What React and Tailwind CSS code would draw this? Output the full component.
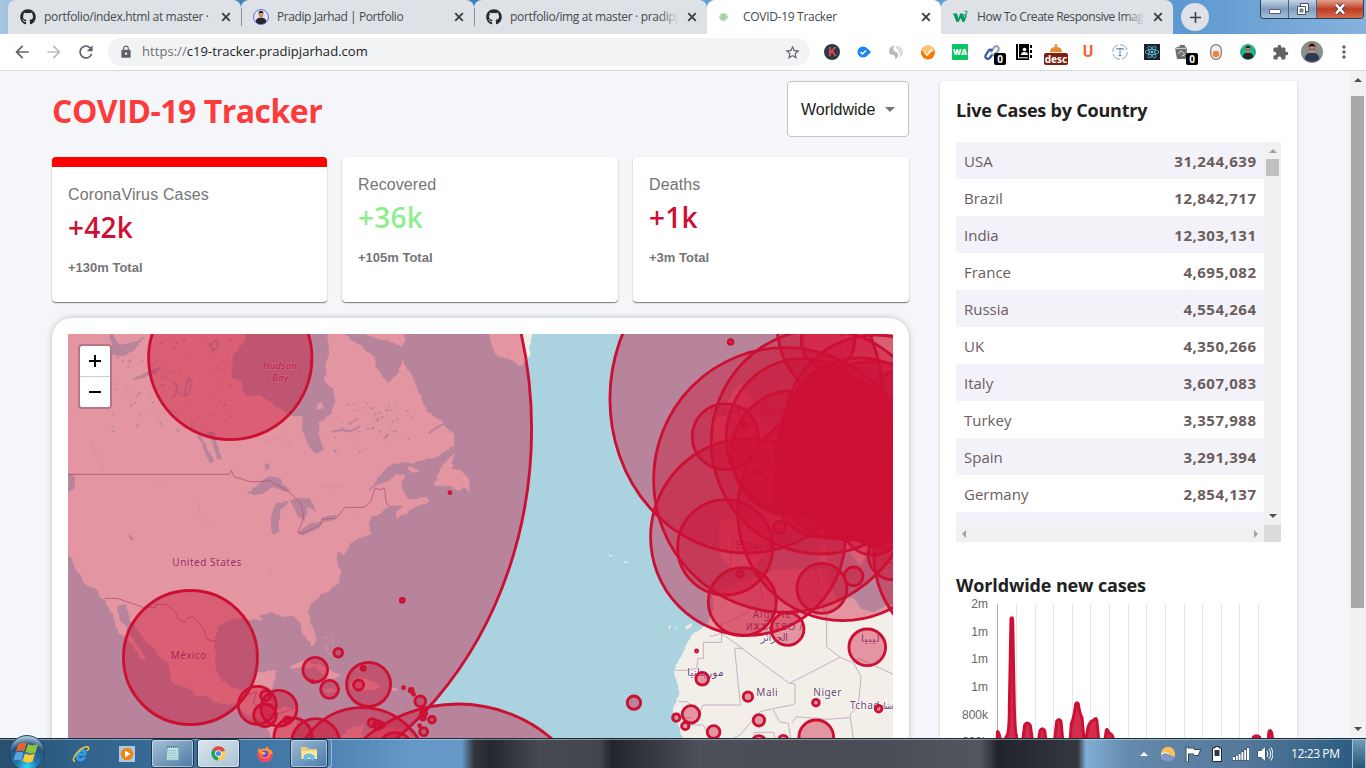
import React from "react";
import { FaGithub, FaReact } from "react-icons/fa";
import { MdArrowBack, MdArrowForward, MdRefresh, MdLock, MdStarBorder, MdAdd, MdMoreVert, MdExtension } from "react-icons/md";

const RED = "#CC1034";

function seeded(seed) {
  let s = seed;
  return () => {
    s = (s * 16807) % 2147483647;
    return s / 2147483647;
  };
}

// Turns a coarse outline into an irregular coastline by midpoint displacement.
function coast(text, amp = 0.16, seed = 7) {
  const rnd = seeded(seed);
  let pts = text.trim().split(/\s+/).map((p) => p.split(",").map(Number));
  for (let k = 0; k < 4; k++) {
    const next = [];
    pts.forEach((a, i) => {
      const b = pts[(i + 1) % pts.length];
      const dx = b[0] - a[0];
      const dy = b[1] - a[1];
      const len = Math.hypot(dx, dy);
      const scale = k === 0 ? 0.6 : 1 + k * 0.35;
      const f = len > 230 || len < 3 ? 0 : (rnd() - 0.5) * 2 * amp * scale;
      next.push(a, [(a[0] + b[0]) / 2 - dy * f, (a[1] + b[1]) / 2 + dx * f]);
    });
    pts = next;
  }
  return "M" + pts.map((p) => p[0].toFixed(1) + " " + p[1].toFixed(1)).join("L") + "Z";
}

const AMERICA_LAND = [
  "-10,-10 555,-10 553,50 518,95 516,160 545,168 555,215 605,212 650,245 690,272 728,276 728,320 740,355 770,388 791,375 778,335 778,290 815,265 826,225 818,190 795,170 797,110 808,80 800,27 800,-10 850,-10 855,30 885,50 920,80 945,95 950,130 985,178 1010,150 1028,105 1060,160 1085,220 1100,260 1150,290 1180,325 1182,365 1140,392 1100,402 1060,415 1000,415 960,450 925,500 975,470 1010,447 1035,450 1025,480 1035,510 1050,525 1100,515 1108,530 1060,550 1010,580 1005,560 1030,545 1000,540 985,550 935,575 925,600 938,628 900,640 870,655 855,690 832,680 830,700 843,740 838,770 800,800 760,830 742,860 755,900 768,945 755,965 730,930 722,895 700,872 670,875 640,862 595,872 608,885 590,885 550,880 510,885 475,905 465,950 465,1020 490,1070 540,1095 575,1085 590,1045 650,1033 645,1065 635,1090 630,1150 705,1150 710,1200 690,1260 640,1260 620,1200 560,1170 530,1135 485,1138 400,1105 335,1070 330,1030 290,985 240,925 205,885 190,845 172,850 180,890 215,935 240,970 263,1005 240,1000 205,950 168,910 160,870 135,825 105,790 78,780 60,745 24,690 -10,670",
  "1275,-10 1420,-10 1412,80 1385,125 1340,100 1310,92 1290,50",
  "895,-10 1040,-10 1027,70 990,50 960,45 905,30",
  "1185,380 1165,400 1122,480 1170,483 1195,500 1212,485 1230,505 1228,470 1205,435 1175,432",
  "690,1028 730,1008 780,1015 820,1040 858,1055 810,1062 760,1025",
  "880,1060 920,1062 968,1085 930,1095 870,1090",
  "995,1090 1012,1091 1011,1098 996,1098",
  "790,1095 812,1088 828,1098 805,1104",
  "835,1260 860,1215 912,1195 905,1230 960,1215 1040,1215 1080,1260",
  "1040,425 1080,437 1060,445",
  "770,240 785,230 790,250 772,255",
];
const AMERICA_WATER = [
  "560,505 600,475 622,455 660,458 668,478 690,492 680,502 640,485 600,508",
  "636,560 650,532 688,530 660,555 657,620 640,628 633,595",
  "690,525 750,520 770,560 740,545 735,590 715,575 700,545",
  "714,625 745,600 790,590 775,610 730,630",
  "785,580 830,568 825,585 790,592",
  "410,330 430,372 452,415 462,410 440,365 425,335",
  "440,318 465,325 470,355 488,405 470,402 455,350",
  "140,10 180,62 260,30 225,75 190,92 150,90 155,60",
  "215,165 245,148 310,122 290,145 240,162",
  "172,845 200,838 208,895 190,885",
  "614,415 630,417 626,435 616,434",
  "203,628 222,642 214,648",
  "24,445 42,450 45,490 24,500",
];
const EAST_LAND = [
  "440,1260 420,1210 398,1160 418,1100 402,1040 430,980 455,930 500,900 522,850 515,800 540,800 600,770 680,740 770,730 862,735 872,790 890,830 940,820 962,850 1000,862 1060,835 1080,1260",
  "540,690 545,580 640,590 695,605 680,680 650,722 570,732",
  "690,605 640,560 680,500 610,480 720,430 800,350 850,250 1080,230 1080,690 1010,650 985,670 960,720 900,650 840,610 780,610",
  "560,235 600,170 650,250 700,330 720,400 620,430 600,330",
  "520,280 570,270 575,340 520,370",
  "790,-10 1080,-10 1080,180 960,120 840,180 800,120",
  "205,692 218,690 214,695",
  "200,686 208,684 205,688",
  "251,711 264,710 262,714 253,713",
  "384,905 392,900 390,915",
  "405,908 411,908 408,915",
  "435,908 458,893 452,906 440,914",
  "835,660 858,655 862,715 838,710",
];
const WEST_BORDERS =
  "M24 448H508L514 436L522 455L570 470L612 470L626 465L690 502L725 540L731 580L714 622L725 626L782 600L786 582L828 580L855 547H912L932 530L945 490L958 494L974 490L978 530L990 548M135 820H172L250 847H286V838H318L350 865V880L374 892L385 877H402L430 910L440 942L474 952";
const EAST_BORDERS =
  "M405 1036H440L470 1030L474 1000H490V952H545V925L510 935M545 925L748 1075L765 1077M748 1075L900 997L940 1013L955 1000L1060 1048M610 970H584L601 1140H490L480 1160L440 1130L415 1130M765 1077V1135L755 1140L695 1152L660 1160L630 1195L600 1230L580 1240M860 860V965L900 997M540 900L600 875L670 830L660 780M940 1013L963 1055L955 1140L930 1170L940 1240M700 1155L718 1190L745 1195L752 1240M755 1195L770 1175L860 1183L928 1178M642 1240V1222H700L705 1240M820 710L835 770L825 800L845 830L855 865M545 610L580 630L570 730M440 1200H490L510 1240M905 60V110M420 1178H456";

const AMERICA_CASES = [
  [512, 99, 245, 245], [438, 313, 978, 1144], [392.5, 997.5, 201, 201], [593, 1141, 57], [658, 1150, 54], [618, 1112, 15], [616, 1171, 34],
  [682, 1185, 9], [700, 1236, 57], [768, 1253, 72], [907, 1347, 199], [1008, 1275, 52], [1195, 1570, 433], [767, 1034, 37], [810, 1093, 27],
  [836, 983, 13], [759, 1070, 3], [911, 1030, 6], [927, 1078, 66], [897, 1080, 15], [1032, 1088, 3], [1055, 1096, 6], [1062, 1108, 3],
  [1082, 1129, 16], [1092, 1165, 9], [1090, 1178, 7], [1117, 1184, 10], [1080, 1202, 3], [1092, 1220, 12], [938, 1193, 12], [955, 1200, 13],
  [965, 1200, 8], [1028, 826, 6], [1171, 503, 3],
];
const EAST_CASES = [
  [620, 222, 409, 462], [735, 465, 393, 397], [625, 636, 292, 295], [557, 667, 143], [608, 830, 102], [557, 335, 99], [615, 303, 8],
  [657, 440, 10], [744, 912, 49], [847, 790, 75], [942, 754, 28], [720, 607, 18], [601, 747, 10], [573, 51, 7], [910, 560, 316, 327],
  [845, 350, 330, 337], [790, 336, 230, 235], [760, 385, 183, 188], [850, 487, 150], [865, 50, 80], [960, 0, 248], [862, 225, 82],
  [960, 335, 236], [1010, 305, 275], [980, 450, 190], [960, 400, 165], [1020, 440, 200], [1040, 520, 150], [930, 420, 195], [1060, 690, 74],
  [1300, 690, 297], [1075, 230, 90], [890, 480, 160], [900, 330, 170], [1000, 380, 270], [1010, 560, 100], [1000, 600, 90], [920, 545, 100],
  [810, 450, 95], [800, 490, 55], [840, 380, 130], [983, 967, 55], [488, 1061, 19], [471, 978, 3], [283, 1133, 20], [454, 1168, 26],
  [410, 1178, 11], [437, 1203, 11], [522, 1221, 19], [625, 1115, 14], [658, 1186, 17], [829, 1133, 10], [830, 1237, 52], [1017, 1151, 10],
  [658, 1252, 20], [731, 1244, 13],
];

function Cases({ list }) {
  return (
    <g fill={RED} fillOpacity="0.4" stroke={RED} strokeWidth="8.6">
      {list.map((c, i) => (
        <ellipse key={i} cx={c[0]} cy={c[1]} rx={c[2]} ry={c[3] || c[2]} />
      ))}
    </g>
  );
}

function lakes() {
  const rnd = seeded(91);
  const out = [];
  for (let i = 0; i < 150; i++) {
    const east = i % 3 === 0;
    const x = east ? 820 + rnd() * 270 : 110 + rnd() * 400;
    const y = east ? 235 + rnd() * 150 : 40 + rnd() * 285;
    const w = 2 + rnd() * 7;
    const h = 2 + rnd() * 5;
    out.push(`M${x} ${y}l${w} ${-h}l${w * 0.6} ${h * 0.5}l${-w * 0.7} ${h}z`);
  }
  return out.join("");
}

function MapLabel({ x, y, w, size = 30, font = "Noto Sans", children, italic, fill = "#6d4673" }) {
  return (
    <text
      x={x} y={y} textLength={w} fontSize={size} fill={fill} stroke="#ffffff" strokeOpacity="0.6" strokeWidth="5" paintOrder="stroke"
      fontFamily={`"${font}", "DejaVu Sans", sans-serif`} fontStyle={italic ? "italic" : "normal"}
    >
      {children}
    </text>
  );
}

function WorldMap() {
  return (
    <svg className="block h-full w-full" viewBox="68 334 825 404" preserveAspectRatio="none">
      <rect x="68" y="334" width="825" height="404" fill="#aad3df" />
      <g transform="translate(60 325) scale(0.33333)">
        {AMERICA_LAND.map((p, i) => <path key={i} d={coast(p, 0.12, 11 + i)} fill="#f2efe9" />)}
        {AMERICA_WATER.map((p, i) => <path key={i} d={coast(p, 0.1, 31 + i)} fill="#aad3df" />)}
        <path d={lakes()} fill="#aad3df" />
        <path d="M340 170l12 15l-5 25l-12 8M385 160l10 10l-8 35l-15 8zM450 60l20 -15l5 20l-15 12zM815 320l30 -5l30 3l25 -15M1105 325l30 -20l20 -10" fill="none" stroke="#aad3df" strokeWidth="6" />
        <path d="M290 485l28-10M410 512l10 40l-6 18l20 20l15 5M630 728v26M780 480l40 10l30-10M885 548v25M455 155l30-20l20 5M90 350l30 60l20 50M610 350l50-10l40 20" fill="none" stroke="#cfe0e3" strokeWidth="2" />
        <path d={WEST_BORDERS} fill="none" stroke="#ae82aa" strokeWidth="2.6" />
        <path d="M565 1110L590 1100L580 1135L610 1150M620 1172L660 1165L700 1150" fill="none" stroke="#ae82aa" strokeWidth="2.6" />
        <path d="M790 940l12 -3M815 940l5 14M796 960l5 20M805 985l8 5" stroke="#f2efe9" strokeWidth="3" fill="none" />
        <MapLabel x={609} y={133} w={101} size={28} italic>Hudson</MapLabel>
        <MapLabel x={636} y={168} w={48} size={28} italic>Bay</MapLabel>
        <MapLabel x={337} y={722} w={207}>United States</MapLabel>
        <MapLabel x={332} y={1001} w={107}>México</MapLabel>
      </g>
      <g transform="translate(540 325) scale(0.33333)">
        {EAST_LAND.map((p, i) => <path key={i} d={coast(p, 0.07, 51 + i)} fill="#f2efe9" />)}
        <path d={EAST_BORDERS} fill="none" stroke="#c4b0c4" strokeWidth="3" />
        <MapLabel x={498} y={269} w={250}>United Kingdom</MapLabel>
        <MapLabel x={587} y={673} w={108}>España</MapLabel>
        <MapLabel x={638} y={878} w={140}>Algérie / </MapLabel>
        <MapLabel x={617} y={914} w={170} font="DejaVu Sans" size={28}>ⵍⵣⵣⴰⵢⴻⵔ /</MapLabel>
        <MapLabel x={662} y={948} w={82} font="DejaVu Sans" size={31}>الجزائر</MapLabel>
        <MapLabel x={963} y={950} w={56} font="DejaVu Sans" size={32}>ليبيا</MapLabel>
        <MapLabel x={441} y={1053} w={110} font="DejaVu Sans" size={32}>موريتانيا</MapLabel>
        <MapLabel x={649} y={1113} w={64}>Mali</MapLabel>
        <MapLabel x={820} y={1114} w={84}>Niger</MapLabel>
        <MapLabel x={930} y={1152} w={88}>Tchad</MapLabel>
        <MapLabel x={1022} y={1152} w={40} font="DejaVu Sans" size={28}>تشاد</MapLabel>
        <MapLabel x={900} y={32} w={115}>Sverige</MapLabel>
        <MapLabel x={1044} y={716} w={90}>Ελλάς</MapLabel>
      </g>
      <g transform="translate(59.6 325) scale(0.33333)"><Cases list={AMERICA_CASES} /></g>
      <g transform="translate(539.6 325) scale(0.33333)"><Cases list={EAST_CASES} /></g>
    </svg>
  );
}

function W3Icon() {
  return (
    <svg viewBox="0 0 18 16" className="h-4 w-[18px]">
      <path d="M0 4h4.500l1.500 6 2-6h3.500l1 5 .8-1.500-.8-2.500 1.500 0 1.500 2-2.800 6.500h-2l-2-4.500-2.500 4.500H4z" fill="#059862" />
      <path d="M13 1.500h3l-1.500 1.600q1.600.2 1.200 1.500T13 5.300" fill="none" stroke="#059862" />
    </svg>
  );
}

function Person({ ring, bg, shirt = "#26262b", glasses }) {
  return (
    <svg viewBox="0 0 16 16" className="h-full w-full">
      <circle cx="8" cy="8" r="7.500" fill={bg} stroke={ring} />
      <path d="M2.600 13Q3 9 6.500 8.700h3Q13 9 13.400 13 8 17.600 2.600 13z" fill={shirt} />
      <ellipse cx="8" cy="5.800" rx="2.300" ry="3" fill="#c79274" />
      <path d="M5.500 5.200Q5.600 1.800 8 1.800t2.500 3.400L9.800 4H6.400z" fill="#211a18" />
      {glasses && <path d="M6 6h1.600M8.400 6H10" stroke="#222" strokeWidth=".8" />}
    </svg>
  );
}

function Virus() {
  return (
    <svg viewBox="0 0 16 16" className="size-4">
      <circle cx="4.500" cy="8" r="3.300" fill="#a5cfa5" />
      <circle cx="4.500" cy="8" r="3.800" fill="none" stroke="#b5d9b5" strokeWidth="1.400" strokeDasharray="1.600 1.200" />
    </svg>
  );
}

function Close() {
  return (
    <svg viewBox="0 0 14 14" className="ml-[6px] size-[14px] shrink-0">
      <path d="M3.200 3.200l7.600 7.600M10.800 3.200l-7.600 7.600" stroke="#3c4043" strokeWidth="1.900" />
    </svg>
  );
}

function Tab({ icon, title, titleClass, className, active, fade }) {
  return (
    <div className={`flex h-[34px] shrink-0 items-center overflow-hidden rounded-t-lg pl-3 pr-2 ${active ? "bg-white" : "bg-[#dee1e6]"} ${className}`}>
      <div className="flex size-4 shrink-0 items-center justify-center text-[#24292e]">{icon}</div>
      <div className="relative ml-2 flex h-5 min-w-0 flex-1 overflow-hidden whitespace-nowrap text-[12px] leading-5 text-[#45494d]">
        <span className={titleClass}>{title}</span>
        {fade && <span className="absolute inset-y-0 right-0 w-5 bg-gradient-to-r from-transparent to-[#dee1e6]" />}
      </div>
      <Close />
    </div>
  );
}

function TabStrip() {
  return (
    <div className="flex h-[34px] shrink-0 bg-[linear-gradient(90deg,#a5c6e3_0px,#3f82b5_240px,#3f82b5_480px,#62a3da_720px,#5c99d0_1180px,#86b2dc_1366px)] pl-2">
      <Tab className="w-[233px]" icon={<FaGithub className="size-4" />} title="portfolio/index.html at master ·" titleClass="tracking-[-0.33px]" />
      <div className="relative z-10 my-2 -mr-px w-px bg-[#8b8f94]" />
      <Tab className="w-[233px]" icon={<Person ring="#5e6ff0" bg="#e6e6ea" />} title="Pradip Jarhad | Portfolio" titleClass="tracking-[-0.42px]" />
      <div className="relative z-10 my-2 -mr-px w-px bg-[#8b8f94]" />
      <Tab className="w-[233px]" icon={<FaGithub className="size-4" />} title="portfolio/img at master · pradipj" titleClass="tracking-[-0.33px]" fade />
      <Tab className="w-[234px]" active icon={<Virus />} title="COVID-19 Tracker" titleClass="tracking-[-0.3px]" />
      <Tab className="w-[232px]" icon={<W3Icon />} title="How To Create Responsive Imag" titleClass="tracking-[-0.45px]" fade />
      <div className="ml-2 mt-[3px] flex size-7 items-center justify-center rounded-full bg-[#dee1e6]">
        <MdAdd className="size-[19px] text-[#3c4043]" />
      </div>
      <div className="ml-[51px] flex h-[19px] w-[104px] overflow-hidden rounded-b border border-t-0 border-[#27405e]">
        <div className="flex w-7 items-center justify-center border-r border-[#4a6484] bg-gradient-to-b from-[#c5d5e6] via-[#7f9cbd] to-[#a5bfd9]">
          <span className="mt-1 h-[5px] w-3 rounded-[1px] border border-[#56606c] bg-white" />
        </div>
        <div className="flex w-7 items-center justify-center border-r border-[#4a6484] bg-gradient-to-b from-[#c5d5e6] via-[#7f9cbd] to-[#a5bfd9]">
          <svg viewBox="0 0 12 12" className="-mt-px size-3">
            <path d="M3.500.5h8v8h-8z" fill="#fff" stroke="#4b5663" /><path d="M.5 3.500h8v8h-8z" fill="#fff" stroke="#4b5663" />
            <path d="M3 6h3v3H3z" fill="#7f9cbd" stroke="#56606c" strokeWidth=".8" />
          </svg>
        </div>
        <div className="flex flex-1 items-center justify-center bg-gradient-to-b from-[#e0a08f] via-[#c03a22] to-[#d56a4a]">
          <svg viewBox="0 0 12 12" className="-mt-px h-3 w-3">
            <path d="M2 1.500l8 9M10 1.500l-8 9" stroke="#5b3f46" strokeWidth="4.600" />
            <path d="M2 1.500l8 9M10 1.500l-8 9" stroke="#fff" strokeWidth="2.600" />
          </svg>
        </div>
      </div>
    </div>
  );
}

function Ext({ children }) {
  return <div className="relative flex w-8 shrink-0 items-center justify-center">{children}</div>;
}

function Badge({ children, className }) {
  return <span className={`absolute flex h-3 items-center justify-center rounded-[2px] font-['Noto_Sans'] text-[10px] font-bold leading-none text-white ${className}`}>{children}</span>;
}

function Toolbar() {
  return (
    <div className="flex h-[37px] shrink-0 items-center border-b border-[#d9dadd] bg-white">
      <MdArrowBack className="ml-3 size-5 text-[#5f6368]" />
      <MdArrowForward className="ml-3 size-5 text-[#bbbdc0]" />
      <MdRefresh className="ml-[12px] size-5 text-[#5f6368]" />
      <div className="ml-3 flex h-7 w-[702px] items-center rounded-full bg-[#f1f3f4] pl-[11px] pr-[9px]">
        <MdLock className="size-[14px] text-[#5f6368]" />
        <span className="ml-[9px] flex-1 text-[13px] tracking-[0.05px] text-[#202124]"><span className="text-[#6b7075]">https://</span>c19-tracker.pradipjarhad.com</span>
        <MdStarBorder className="size-[17px] text-[#5f6368]" />
      </div>
      <div className="ml-[6px] flex h-full">
        <Ext><span className="flex size-4 items-center justify-center rounded-full bg-[#2b3a4a] font-['Roboto'] text-[13px] font-semibold text-[#e2474b]">K</span></Ext>
        <Ext>
          <svg viewBox="0 0 16 16" className="size-4">
            <path d="M7 2.500q3 0 5 2.500l3 3-3 3q-2 2.500-5 2.500a5.500 5.500 0 0 1 0-11z" fill="#1e84ee" />
            <path d="M4.500 8l2 2 3.500-3.500" fill="none" stroke="#fff" strokeWidth="1.500" />
          </svg>
        </Ext>
        <Ext>
          <svg viewBox="0 0 16 16" className="size-4">
            <path d="M6 1.500Q1 3 1 7q0 4 4 4 3 .5 2 4 4-1.500 3-5Q9.500 8 7 7.500T6 1.500z" fill="#b9b9b9" />
            <path d="M8 2q6 0 7 5 .5 5-4 7 2-4-.5-7Q8 5 8 2z" fill="#dcdcdc" />
          </svg>
        </Ext>
        <Ext>
          <svg viewBox="0 0 16 16" className="size-4">
            <circle cx="8" cy="8.500" r="7" fill="#f57a08" />
            <path d="M1.600 7a6.500 6.500 0 0 1 12.800 0Q8 10 1.600 7z" fill="#ffc46e" />
            <path d="M4.500 8l2.500 3 5-5.500" fill="none" stroke="#fff" strokeWidth="1.800" />
          </svg>
        </Ext>
        <Ext>
          <svg viewBox="0 0 16 16" className="size-4">
            <rect width="16" height="16" rx="1" fill="#0bc462" />
            <text x="1" y="10.800" textLength="14" lengthAdjust="spacingAndGlyphs" fontFamily="Open Sans, sans-serif" fontSize="8" fontWeight="800" fill="#fff">WA</text>
          </svg>
        </Ext>
        <Ext>
          <svg viewBox="0 0 16 16" className="size-4">
            <path d="M6.500 8.500L10 3.500Q12.500 1 14 3t0 4L11 10.500Q9 12 7.500 10" fill="none" stroke="#9ba3b8" strokeWidth="2.200" />
            <path d="M8.500 6.500Q6 4.500 4.500 7L2 10.500q-1.500 3 .5 4t4-1.500L8 11" fill="none" stroke="#3454a4" strokeWidth="2.200" />
          </svg>
          <Badge className="bottom-[5px] left-[18px] w-3 bg-black">0</Badge>
        </Ext>
        <Ext>
          <svg viewBox="0 0 16 16" className="size-4">
            <path d="M0 0h13v16H0z M14 1h2v3h-2zM14 6h2v3h-2zM14 11h2v3h-2z" fill="#000" />
            <path d="M2.500 0v14.500M3 13.800h9" stroke="#fff" />
            <circle cx="8.500" cy="5.500" r="1.800" fill="#fff" />
            <path d="M5 11q0-3 3.500-3t3.500 3z" fill="#fff" />
          </svg>
        </Ext>
        <Ext>
          <svg viewBox="0 0 18 18" className="mb-px size-[18px]">
            <path d="M3 9q0-5 6-5t6 5z" fill="#e58a35" /><circle cx="9" cy="2.500" r="1.500" fill="#e58a35" />
            <path d="M1 10.500h16" stroke="#d4803a" strokeWidth="1.300" />
          </svg>
          <Badge className="bottom-[5px] left-1 w-6 bg-[#7c1f10]">desc</Badge>
        </Ext>
        <Ext><span className="font-['Roboto'] text-[16px] font-bold text-[#f0642f]">U</span></Ext>
        <Ext>
          <svg viewBox="0 0 16 16" className="size-4">
            <circle cx="8" cy="8" r="7.200" fill="none" stroke="#74a2c8" strokeDasharray="9 2.300" />
            <path d="M4.800 6V4.700h6.400V6M8 4.700v7M6.500 11.700h3" fill="none" stroke="#4a80ad" />
          </svg>
        </Ext>
        <Ext><span className="flex size-4 items-center justify-center bg-[#20232a]"><FaReact className="size-[14px] text-[#61dafb]" /></span></Ext>
        <Ext>
          <svg viewBox="0 0 16 16" className="mr-1 size-4">
            <path d="M1 4l5-2V1h5v2l2 1-.5 11H3z" fill="#6f6f6f" /><path d="M1.500 4.500h11" stroke="#c6c6c6" strokeWidth="1.200" />
            <path d="M4.500 10l2-3 2 1M9.500 8l1 3-3 1" stroke="#d6d6d6" fill="none" />
          </svg>
          <Badge className="bottom-[5px] left-[18px] w-3 bg-black">0</Badge>
        </Ext>
        <Ext>
          <svg viewBox="0 0 16 16" className="size-4">
            <rect x="2.700" y=".6" width="10.600" height="14.800" rx="5.300" fill="#eee" stroke="#777" strokeWidth="1.200" />
            <circle cx="8" cy="10" r="3.300" fill="#f5803c" />
          </svg>
        </Ext>
        <Ext><span className="size-4"><Person ring="#22b58e" bg="#22b58e" glasses /></span></Ext>
        <Ext><MdExtension className="size-[17px] text-[#5f6368]" /></Ext>
        <Ext><span className="size-[22px]"><Person ring="#8c8c8c" bg="#8e8e8e" shirt="#2d3b52" glasses /></span></Ext>
        <Ext><MdMoreVert className="size-5 text-[#5f6368]" /></Ext>
      </div>
    </div>
  );
}

function StatCard({ title, titleClass, value, valueClass, total, selected }) {
  return (
    <div className={`h-[145px] rounded bg-white px-4 shadow-[0_1px_1px_rgba(0,0,0,0.45),0_1px_3px_rgba(0,0,0,0.1)] ${selected ? "border-t-[10px] border-[#ff0000]" : ""}`}>
      <div className="pt-4 font-['Liberation_Sans'] text-[16px] leading-6 text-[#757575]"><span className={titleClass}>{title}</span></div>
      <div className={`mt-[3px] text-[28px] font-semibold leading-[34px] tracking-[0.25px] ${valueClass}`}>{value}</div>
      <div className="mt-3 font-['Liberation_Sans'] text-[13px] font-bold leading-6 text-[#757575]">{total}</div>
    </div>
  );
}

const COUNTRIES = [
  ["USA", "31,244,639"], ["Brazil", "12,842,717"], ["India", "12,303,131"], ["France", "4,695,082"], ["Russia", "4,554,264"],
  ["UK", "4,350,266"], ["Italy", "3,607,083"], ["Turkey", "3,357,988"], ["Spain", "3,291,394"], ["Germany", "2,854,137"], ["", ""],
];

function Arrow({ d, color = "#a3a3a3" }) {
  return <svg viewBox="0 0 8 8" className="size-2"><path d={d} fill={color} /></svg>;
}

const UP = "M0 6l4-4 4 4z";
const DOWN = "M0 2l4 4 4-4z";

function CountryTable() {
  return (
    <div className="mt-5 h-[400px] w-[325px]">
      <div className="flex h-[383px]">
        <div className="w-[308px] overflow-hidden">
          {COUNTRIES.map(([name, count], i) => (
            <div key={i} className={`flex h-[37px] items-center justify-between px-2 pt-0.5 text-[15px] text-[#6a5d5d] ${i % 2 ? "bg-white" : "bg-[#f3f2f8]"}`}>
              <span>{name}</span>
              <span className="-mr-[0.5px] font-bold tracking-[0.5px]">{count}</span>
            </div>
          ))}
        </div>
        <div className="flex w-[17px] flex-col items-center bg-[#f1f1f1] pb-[5px] pt-[5px]">
          <Arrow d={UP} />
          <div className="mt-1 h-[17px] w-[13px] bg-[#c1c1c1]" />
          <div className="flex-1" />
          <Arrow d={DOWN} color="#505050" />
        </div>
      </div>
      <div className="flex h-[17px]">
        <div className="flex w-[308px] items-center justify-between bg-[#f1f1f1] px-[5px]">
          <Arrow d="M5 0v8L1 4z" />
          <Arrow d="M3 0v8l4-4z" />
        </div>
        <div className="w-[17px] bg-[#dcdcdc]" />
      </div>
    </div>
  );
}

function CasesChart() {
  return (
    <div className="flex h-[180px] w-[325px]">
      <div className="flex w-8 flex-col items-end gap-[3.700px] pt-px font-['Liberation_Sans'] text-[12px] leading-6 text-[#666666]">
        {["2m", "1m", "1m", "1m", "800k", "600k"].map((t, i) => <div key={i} className="-mt-3 mb-3 h-6">{t}</div>)}
      </div>
      <svg className="h-[180px] w-[293px]" viewBox="174 309 879 540">
        <path d="M202.500 312V849" stroke="#b0b0b0" strokeWidth="3" />
        <path d="M259.500 312V849M316.500 312V849M370.500 312V849M427.500 312V849M481.500 312V849M538.500 312V849M595.500 312V849M649.500 312V849M706.500 312V849M763.500 312V849M817.500 312V849M874.500 312V849M928.500 312V849M985.500 312V849" stroke="#e5e5e5" strokeWidth="3" />
        <path
          d="M202 695Q207 692 212 725L220 760L228 710Q238 710 238 620L243 355Q247 350 248 358L253 620Q255 695 259 705L264 740L276 735L284 675Q291 663 301 676L310 740H322L330 692Q337 681 344 692L351 740H372L380 664Q387 653 393 664L400 740H419L424 670Q432 655 437 612Q441 604 445 612Q449 642 456 653L464 740L474 682Q480 664 488 662L496 656Q500 655 501 665L508 740H522L529 690Q532 684 537 700Q547 698 552 725L560 800H962L970 712Q979 702 989 712L996 760H1010L1017 695Q1021 687 1025 698L1034 760V849H202Z"
          fill={RED} fillOpacity="0.88" stroke={RED} strokeWidth="9" strokeLinejoin="round"
        />
      </svg>
    </div>
  );
}

function Page() {
  return (
    <div className="flex h-[667px] shrink-0 overflow-hidden bg-[#f5f6fa]">
      <main className="ml-[52px] w-[857px] shrink-0 pt-[10px]">
        <div className="flex h-14 items-center justify-between">
          <h1 className="pt-1 text-[32px] font-bold tracking-[-0.5px] text-[#fc3c3c]">COVID-19 Tracker</h1>
          <div className="flex h-14 w-[122px] items-center rounded border border-[#c4c4c6] bg-white pl-[13px] text-[#212121]">
            <span className="w-[82px] pt-px font-['Liberation_Sans'] text-[16px]">Worldwide</span>
            <svg viewBox="0 0 10 5" className="ml-0.5 h-[5px] w-[10px]"><path d="M0 0h10L5 5z" fill="#757575" /></svg>
          </div>
        </div>
        <div className="mt-5 grid grid-cols-[275px_276px_276px] gap-[15px]">
          <StatCard selected title="CoronaVirus Cases" titleClass="tracking-[0.15px]" value="+42k" valueClass="text-[#CC1034]" total="+130m Total" />
          <StatCard title="Recovered" titleClass="tracking-[0.1px]" value="+36k" valueClass="text-[#90ee90]" total="+105m Total" />
          <StatCard title="Deaths" titleClass="tracking-[0.1px]" value="+1k" valueClass="text-[#CC1034]" total="+3m Total" />
        </div>
        <div className="mt-4 h-[500px] rounded-[20px] bg-white p-4 shadow-[0_0_8px_-3px_rgba(0,0,0,0.5)]">
          <div className="relative h-[404px]">
            <WorldMap />
            <div className="absolute left-[10px] top-[10px] flex h-[65px] w-[34px] flex-col rounded border-2 border-[#b47785] bg-white text-black">
              <div className="flex h-[31px] items-center justify-center border-b border-[#cccccc]">
                <svg viewBox="0 0 12 12" className="size-3"><path d="M6 0v12M0 6h12" stroke="#000" strokeWidth="2" /></svg>
              </div>
              <div className="flex h-[30px] items-center justify-center">
                <svg viewBox="0 0 12 12" className="size-3"><path d="M0 6h12" stroke="#000" strokeWidth="2" /></svg>
              </div>
            </div>
          </div>
        </div>
      </main>
      <aside className="ml-[31px] mt-[10px] h-[700px] w-[357px] shrink-0 rounded bg-white px-4 pt-[15px] shadow-[0_1px_3px_rgba(0,0,0,0.2)]">
        <h3 className="h-[26px] text-[18px] font-bold leading-[28px] text-[#212121]"><span className="tracking-[-0.2px]">Live Cases by Country</span></h3>
        <CountryTable />
        <h3 className="mt-[30px] h-[31px] text-[18px] font-bold leading-[27px] text-[#212121]"><span className="tracking-[-0.13px]">Worldwide new cases</span></h3>
        <CasesChart />
      </aside>
      <div className="ml-auto flex w-[17px] shrink-0 flex-col items-center bg-[#f1f1f1] pb-[5px] pt-[5px]">
        <Arrow d={UP} color="#505050" />
        <div className="mt-3 h-[512px] w-[13px] bg-[#a8a8a8]" />
        <div className="flex-1" />
        <Arrow d={DOWN} color="#505050" />
      </div>
    </div>
  );
}

function TaskButton({ className, children }) {
  return <div className={`flex h-[29px] shrink-0 items-center justify-center rounded-[3px] border border-[#1f3a55] shadow-[inset_0_0_0_1px_rgba(255,255,255,0.45)] ${className}`}>{children}</div>;
}

function Taskbar() {
  return (
    <footer className="relative flex h-[30px] shrink-0 border-t border-[#1b2a3a] bg-[linear-gradient(90deg,#27506f_0px,#30628c_80px,#467aa9_300px,#6598c6_410px,#6598c6_462px,#33363c_474px,#24272d_490px,#474a50_540px,#42454b_600px,#23252c_612px,#4d5059_700px,#484b53_850px,#53565f_980px,#202329_998px,#35383f_1078px,#82aed6_1086px,#6389ab_1130px,#55799a_1240px,#285a80_1366px)] shadow-[inset_0_1px_0_rgba(255,255,255,0.4)]">
      <div className="-mt-1 ml-2 h-[37px] w-[38px] shrink-0">
        <svg viewBox="0 0 38 38" className="h-[38px] w-[38px]">
          <defs>
            <radialGradient id="orb" cx="50%" cy="90%" r="85%">
              <stop offset="0" stopColor="#2fd9fb" /><stop offset=".35" stopColor="#2475a8" /><stop offset=".75" stopColor="#24547c" /><stop offset="1" stopColor="#a5c3d8" />
            </radialGradient>
          </defs>
          <circle cx="19" cy="18" r="17.500" fill="url(#orb)" stroke="#244661" />
          <path d="M10 9.500q5-3 8.500-1l-2.500 8q-4-2-8 0z" fill="#e8622c" />
          <path d="M20 9q4 2.500 10 0l-2.500 8.500q-5 2-10-.5z" fill="#8cc43c" />
          <path d="M7.500 18q4-2.500 8 0l-2.200 8q-4-2.500-8 0z" fill="#54a4e2" />
          <path d="M17 18.500q5 2.500 10 0l-2.500 8q-4 2.500-10-.5z" fill="#fccb3c" />
        </svg>
      </div>
      <div className="flex w-[70px] items-center justify-center">
        <svg viewBox="0 0 18 18" className="size-[18px]">
          <path d="M13 12Q10.500 15.500 7 14.500 4.500 13 5.200 9.500 7 5 10.800 5.200q3.200 1 2.200 4H6" fill="none" stroke="#2f9fe8" strokeWidth="3" />
          <path d="M3 16.500Q-1 15 5 8t11-6q2 1-1 4" fill="none" stroke="#f5c431" strokeWidth="1.500" />
        </svg>
      </div>
      <div className="flex w-[22px] items-center justify-center">
        <svg viewBox="0 0 16 16" className="size-4">
          <rect width="16" height="16" fill="#a9cce6" /><circle cx="8" cy="8" r="6.300" fill="#f28412" /><path d="M6 4.500v7L11.500 8z" fill="#fff" />
        </svg>
      </div>
      <TaskButton className="ml-[13px] w-[43px] bg-gradient-to-br from-[#a9c1d7] to-[#487aa4]">
        <svg viewBox="0 0 16 18" className="h-[17px] w-4">
          <path d="M2 2h12v14H1z" fill="#bfe5e9" stroke="#7daab0" /><path d="M2 2h12" stroke="#606a70" strokeWidth="2" strokeDasharray="1 1" />
          <path d="M3 6h9M3 8.500h9M3 11h9M3 13.500h9" stroke="#8fc3c8" />
        </svg>
      </TaskButton>
      <TaskButton className="ml-[3px] w-[43px] bg-gradient-to-br from-[#dce6ef] to-[#a9c1d6]">
        <svg viewBox="0 0 16 16" className="size-[15px]">
          <path d="M8 8L1.500 4A7.500 7.500 0 0 1 15 5z" fill="#dd4b3e" />
          <path d="M8 8L7.500 15.500A7.500 7.500 0 0 1 1.500 4z" fill="#1da362" />
          <path d="M8 8L15 5A7.500 7.500 0 0 1 7.500 15.500z" fill="#ffcd46" />
          <circle cx="8" cy="8" r="3.600" fill="#fff" /><circle cx="8" cy="8" r="2.800" fill="#4c8bf5" />
        </svg>
      </TaskButton>
      <div className="flex w-[50px] items-center justify-center">
        <svg viewBox="0 0 16 16" className="size-4">
          <path d="M8 16A7.500 7.500 0 0 1 .5 8Q.5 5 2 2l2 2q1-2 4-1Q9 1 10 0q1 3 3 4l.5-1Q16 6 15.500 9 14.500 15.500 8 16z" fill="#ff9430" />
          <path d="M8 16A7.500 7.500 0 0 1 .5 8l1-3q2 8 7 7.500T13 8l2.500 1Q14.500 15.500 8 16z" fill="#fb4064" />
          <circle cx="8" cy="8" r="3.400" fill="#7a45d8" /><path d="M4 6q3-1 5 1.500L6 9z" fill="#ffbe3c" />
        </svg>
      </div>
      <TaskButton className="w-[38px] bg-gradient-to-br from-[#9fbad3] to-[#477caa]">
        <svg viewBox="0 0 18 16" className="h-4 w-[18px]">
          <path d="M1 1h6l1 2h9v10H1z" fill="#e9cf78" /><path d="M2 5h15v8H2z" fill="#f8e8a6" /><path d="M4 15V10q5-4 10 0v5h-3v-4H7v4z" fill="#6fc4ec" stroke="#3c97c7" strokeWidth=".6" />
        </svg>
      </TaskButton>
      <div className="h-[29px] w-1 rounded-r-sm border border-l-0 border-[#9dbcd6]" />
      <div className="ml-auto flex items-center pt-px">
        <svg viewBox="0 0 8 4" className="mr-3 h-1 w-2"><path d="M0 4l4-4 4 4z" fill="#fff" /></svg>
        <svg viewBox="0 0 16 16" className="mr-[9px] size-4">
          <circle cx="8" cy="8" r="7.200" fill="#f9c15a" /><path d="M1 8q5-3 8 0t6 2Q13 15 8 15.200T1 8z" fill="#8296c9" /><path d="M1 8q5-3 8 0" stroke="#fff" fill="none" />
        </svg>
        <svg viewBox="0 0 16 16" className="mr-[8px] size-4">
          <path d="M1.500 15.500V1.500h1.500v14zM3 2.500h5.500l1 1.500h5.500l-2 5H9.500l-1-1.500H3z" fill="#fff" stroke="#26394d" strokeWidth="1.600" paintOrder="stroke" />
        </svg>
        <svg viewBox="0 0 16 16" className="mr-[8px] size-4"><path d="M6 .5h4V2h2.500v13.500h-9V2H6z" fill="#fff" stroke="#1d2a38" /><path d="M5.500 4h5v6h-5z" fill="#26394d" /></svg>
        <svg viewBox="0 0 16 14" className="mr-[8px] h-[14px] w-4">
          <path d="M0 10h2v3H0zM2.800 8.500h2V13h-2zM5.600 7h2v6h-2zM8.400 5h2v8h-2zM11.200 3h2v10h-2zM14 1h2v12h-2z" fill="#fff" stroke="#26394d" strokeWidth="1" paintOrder="stroke" />
        </svg>
        <svg viewBox="0 0 16 16" className="size-4"><path d="M1 5h3l4-4v14l-4-4H1z" fill="#fff" stroke="#26394d" paintOrder="stroke" /><path d="M10 5q2 3 0 6M12 3q3.500 5 0 10M14 1.500q4 6.500 0 13" fill="none" stroke="#fff" /></svg>
        <span className="ml-[18px] w-[50px] whitespace-nowrap text-[12px] tracking-[-0.4px] text-white">12:23 PM</span>
        <div className="ml-[11px] h-[30px] w-[14px] border border-[#a5c1d8] bg-gradient-to-b from-[#7099b5] to-[#285776]" />
      </div>
    </footer>
  );
}

export default function App() {
  return (
    <div className="flex h-[768px] w-[1366px] flex-col overflow-hidden font-['Open_Sans','Noto_Sans',sans-serif]">
      <TabStrip />
      <Toolbar />
      <Page />
      <Taskbar />
    </div>
  );
}
